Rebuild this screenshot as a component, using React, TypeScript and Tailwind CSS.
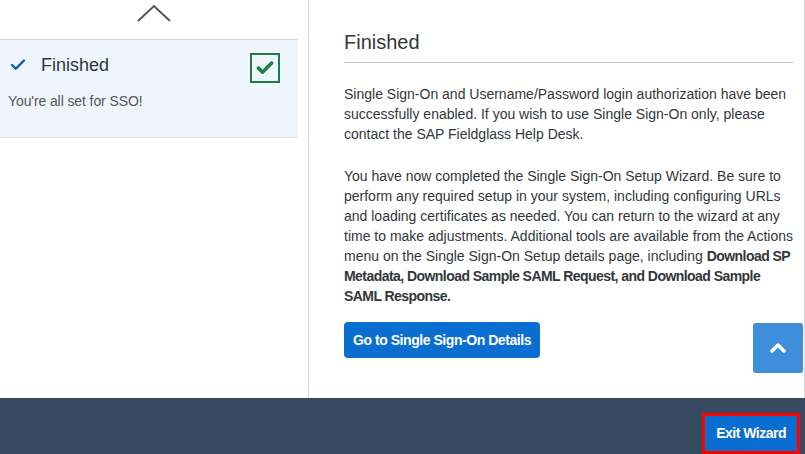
import { Check, ChevronUp } from "lucide-react";

export default function App() {
  return (
    <div className="flex h-[454px] w-[805px] flex-col overflow-hidden bg-white font-['Liberation_Sans',Arial,sans-serif] text-[#32363a]">
      <div className="flex h-[398px]">
        {/* steps column */}
        <div className="w-[309px] shrink-0 border-r border-[#d5d5d5]">
          <div className="flex h-[39px] justify-center pt-[4px]">
            <svg width="34" height="18" viewBox="0 0 34 18" fill="none">
              <path d="M1 17 L17 2 L33 17" stroke="#555" strokeWidth="2" />
            </svg>
          </div>
          <div className="mr-[10px] h-[99px] border-y border-t-[#cdd3da] border-b-[#e3e5e8] bg-[#eff5fc]">
            <div className="flex items-start justify-between pl-[9px] pr-[18px] pt-[13px]">
              <div className="flex items-center gap-[14px] pt-[1px]">
                <Check className="h-[18px] w-[18px] text-[#0a5aa8]" strokeWidth={3.2} />
                <span className="text-[18px] leading-[22px] text-[#32363a]">Finished</span>
              </div>
              <div className="flex h-[30px] w-[30px] items-center justify-center border-2 border-[#1d7d44]">
                <Check className="h-[20px] w-[20px] text-[#1d7d44]" strokeWidth={4.2} />
              </div>
            </div>
            <p className="mt-[8px] pl-[8px] text-[14px] tracking-[-0.1px] text-[#555]">You're all set for SSO!</p>
          </div>
        </div>

        {/* content */}
        <div className="relative flex-1 border-r border-[#d5d5d5] pl-[35px] pr-[10px] pt-[30px]">
          <h2 className="border-b border-[#c5ccd3] pb-[8px] text-[20px] leading-[24px]">Finished</h2>
          <p className="mt-[21px] text-[14px] leading-[20px]">
            Single Sign-On and Username/Password login authorization have been successfully enabled. If you wish to use
            Single Sign-On only, please contact the SAP Fieldglass Help Desk.
          </p>
          <p className="mt-[22px] text-[14px] leading-[20px]">
            You have now completed the Single Sign-On Setup Wizard. Be sure to perform any required setup in your
            system, including configuring URLs and loading certificates as needed. You can return to the wizard at any
            time to make adjustments. Additional tools are available from the Actions menu on the Single Sign-On Setup
            details page, including{" "}
            <b className="tracking-[-0.55px]">
              Download SP Metadata, Download Sample SAML Request, and Download Sample SAML Response.
            </b>
          </p>
          <button className="mt-[16px] h-[36px] rounded-[4px] bg-[#0a6ed1] px-[9px] text-[14px] font-bold tracking-[-0.45px] text-white">
            Go to Single Sign-On Details
          </button>
          <button className="absolute right-[1px] top-[323px] flex h-[50px] w-[50px] items-center justify-center rounded-[3px] bg-[#3f8edb]">
            <ChevronUp className="h-[24px] w-[24px] text-white" strokeWidth={3.5} />
          </button>
        </div>
      </div>

      {/* footer */}
      <div className="flex h-[56px] items-center justify-end bg-[#354a5f] pr-[5px] pt-[14px]">
        <div className="border-[3px] border-[#ff0000]">
          <button className="h-[35px] bg-[#0a6ed1] px-[11px] text-[14px] font-bold tracking-[-0.5px] text-white">
            Exit Wizard
          </button>
        </div>
      </div>
    </div>
  );
}
